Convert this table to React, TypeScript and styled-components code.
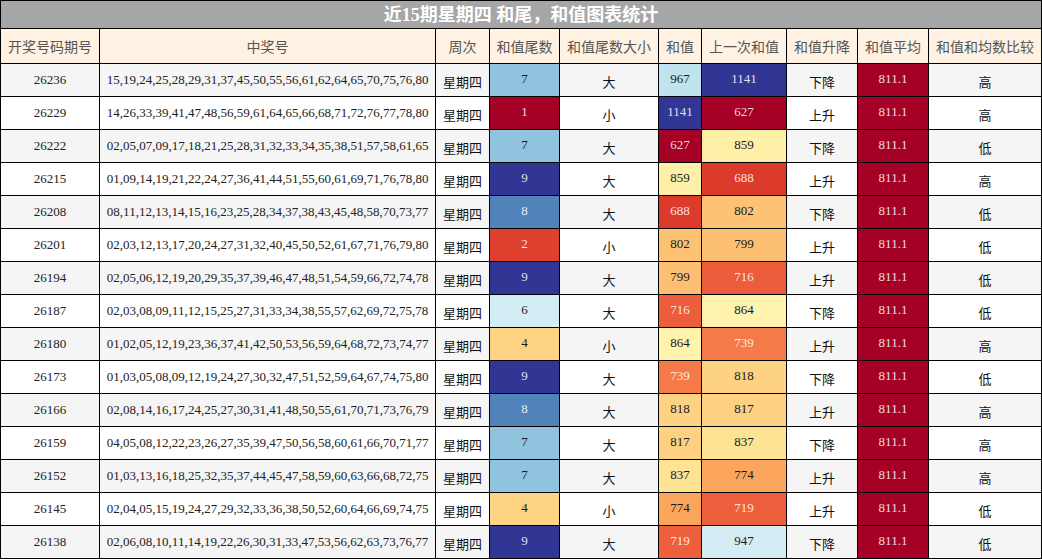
import React from "react";
import styled, { createGlobalStyle } from "styled-components";

const GlobalStyle = createGlobalStyle`
  html, body { margin: 0; padding: 0; background: #ffffff; }
  body { font-family: "Liberation Serif", "Noto Sans CJK SC", serif; }
`;

const PALETTE = [
  "#a50026", "#d73027", "#f46d43", "#fdae61", "#fee090", "#ffffbf",
  "#e0f3f8", "#abd9e9", "#74add1", "#4575b4", "#313695",
];

function hexToRgb(h: string): number[] {
  const n = parseInt(h.slice(1), 16);
  return [(n >> 16) & 255, (n >> 8) & 255, n & 255];
}

function rdylbu(t: number): string {
  const c = Math.max(0, Math.min(1, t)) * (PALETTE.length - 1);
  const i = Math.min(Math.floor(c), PALETTE.length - 2);
  const f = c - i;
  const a = hexToRgb(PALETTE[i]);
  const b = hexToRgb(PALETTE[i + 1]);
  const m = a.map((v, k) => Math.round(v + (b[k] - v) * f));
  return `rgb(${m[0]},${m[1]},${m[2]})`;
}

type Row = {
  period: string;
  nums: string;
  tail: number;
  size: string;
  sum: number;
  prev: number;
  trend: string;
  cmp: string;
};

const rows: Row[] = [
  { period: "26236", nums: "15,19,24,25,28,29,31,37,45,50,55,56,61,62,64,65,70,75,76,80", tail: 7, size: "大", sum: 967, prev: 1141, trend: "下降", cmp: "高" },
  { period: "26229", nums: "14,26,33,39,41,47,48,56,59,61,64,65,66,68,71,72,76,77,78,80", tail: 1, size: "小", sum: 1141, prev: 627, trend: "上升", cmp: "高" },
  { period: "26222", nums: "02,05,07,09,17,18,21,25,28,31,32,33,34,35,38,51,57,58,61,65", tail: 7, size: "大", sum: 627, prev: 859, trend: "下降", cmp: "低" },
  { period: "26215", nums: "01,09,14,19,21,22,24,27,36,41,44,51,55,60,61,69,71,76,78,80", tail: 9, size: "大", sum: 859, prev: 688, trend: "上升", cmp: "高" },
  { period: "26208", nums: "08,11,12,13,14,15,16,23,25,28,34,37,38,43,45,48,58,70,73,77", tail: 8, size: "大", sum: 688, prev: 802, trend: "下降", cmp: "低" },
  { period: "26201", nums: "02,03,12,13,17,20,24,27,31,32,40,45,50,52,61,67,71,76,79,80", tail: 2, size: "小", sum: 802, prev: 799, trend: "上升", cmp: "低" },
  { period: "26194", nums: "02,05,06,12,19,20,29,35,37,39,46,47,48,51,54,59,66,72,74,78", tail: 9, size: "大", sum: 799, prev: 716, trend: "上升", cmp: "低" },
  { period: "26187", nums: "02,03,08,09,11,12,15,25,27,31,33,34,38,55,57,62,69,72,75,78", tail: 6, size: "大", sum: 716, prev: 864, trend: "下降", cmp: "低" },
  { period: "26180", nums: "01,02,05,12,19,23,36,37,41,42,50,53,56,59,64,68,72,73,74,77", tail: 4, size: "小", sum: 864, prev: 739, trend: "上升", cmp: "高" },
  { period: "26173", nums: "01,03,05,08,09,12,19,24,27,30,32,47,51,52,59,64,67,74,75,80", tail: 9, size: "大", sum: 739, prev: 818, trend: "下降", cmp: "低" },
  { period: "26166", nums: "02,08,14,16,17,24,25,27,30,31,41,48,50,55,61,70,71,73,76,79", tail: 8, size: "大", sum: 818, prev: 817, trend: "上升", cmp: "高" },
  { period: "26159", nums: "04,05,08,12,22,23,26,27,35,39,47,50,56,58,60,61,66,70,71,77", tail: 7, size: "大", sum: 817, prev: 837, trend: "下降", cmp: "高" },
  { period: "26152", nums: "01,03,13,16,18,25,32,35,37,44,45,47,58,59,60,63,66,68,72,75", tail: 7, size: "大", sum: 837, prev: 774, trend: "上升", cmp: "高" },
  { period: "26145", nums: "02,04,05,15,19,24,27,29,32,33,36,38,50,52,60,64,66,69,74,75", tail: 4, size: "小", sum: 774, prev: 719, trend: "上升", cmp: "低" },
  { period: "26138", nums: "02,06,08,10,11,14,19,22,26,30,31,33,47,53,56,62,63,73,76,77", tail: 9, size: "大", sum: 719, prev: 947, trend: "下降", cmp: "低" },
];

const headers = ["开奖号码期号", "中奖号", "周次", "和值尾数", "和值尾数大小", "和值", "上一次和值", "和值升降", "和值平均", "和值和均数比较"];

const Grid = styled.div`
  display: grid;
  grid-template-columns: 98px 335px 53px 69px 98px 42px 84px 70px 70px 112px;
  grid-template-rows: 27px 34px repeat(15, 32px);
  gap: 1px;
  padding: 1px;
  background: #000000;
  width: max-content;
`;

const Title = styled.div`
  grid-column: 1 / -1;
  background: #a6a6a6;
  color: #ffffff;
  font-size: 18px;
  font-weight: bold;
  display: flex;
  align-items: center;
  justify-content: center;
  line-height: 1;
`;

const HeadCell = styled.div`
  background: #fff2e3;
  color: #555555;
  font-family: "Noto Sans CJK SC", sans-serif;
  font-size: 14px;
  display: flex;
  align-items: center;
  justify-content: center;
  white-space: nowrap;
`;

const Cell = styled.div<{ $alt: boolean }>`
  background: ${(p) => (p.$alt ? "#f5f5f5" : "#ffffff")};
  color: #222222;
  font-size: 13px;
  display: flex;
  align-items: center;
  justify-content: center;
  white-space: nowrap;
`;

const CjkCell = styled(Cell)`
  font-family: "Noto Sans CJK SC", sans-serif;
  color: #111111;
  padding-top: 3px;
`;

const HeatCell = styled.div<{ $bg: string; $light: boolean }>`
  background: ${(p) => p.$bg};
  color: ${(p) => (p.$light ? "rgba(255,255,255,0.86)" : "#1a1a1a")};
  font-size: 13px;
  display: flex;
  align-items: center;
  justify-content: center;
  padding-bottom: 2px;
`;

function Heat({ t, children }: { t: number; children: React.ReactNode }) {
  return (
    <HeatCell $bg={rdylbu(t)} $light={t < 0.25 || t > 0.8}>
      {children}
    </HeatCell>
  );
}

export default function App() {
  const sums = rows.map((r) => r.sum).concat(rows.map((r) => r.prev));
  const min = Math.min(...sums);
  const max = Math.max(...sums);
  const norm = (v: number) => (v - min) / (max - min);
  const tailT = (v: number) => (v - 1) / 8;
  return (
    <>
      <GlobalStyle />
      <Grid>
        <Title>近15期星期四 和尾，和值图表统计</Title>
        {headers.map((h) => (
          <HeadCell key={h}>{h}</HeadCell>
        ))}
        {rows.map((r, i) => {
          const alt = i % 2 === 0;
          return (
            <React.Fragment key={r.period}>
              <Cell $alt={alt}>{r.period}</Cell>
              <Cell $alt={alt}>{r.nums}</Cell>
              <CjkCell $alt={alt}>星期四</CjkCell>
              <Heat t={tailT(r.tail)}>{r.tail}</Heat>
              <CjkCell $alt={alt}>{r.size}</CjkCell>
              <Heat t={norm(r.sum)}>{r.sum}</Heat>
              <Heat t={norm(r.prev)}>{r.prev}</Heat>
              <CjkCell $alt={alt}>{r.trend}</CjkCell>
              <Heat t={0}>811.1</Heat>
              <CjkCell $alt={alt}>{r.cmp}</CjkCell>
            </React.Fragment>
          );
        })}
      </Grid>
    </>
  );
}
